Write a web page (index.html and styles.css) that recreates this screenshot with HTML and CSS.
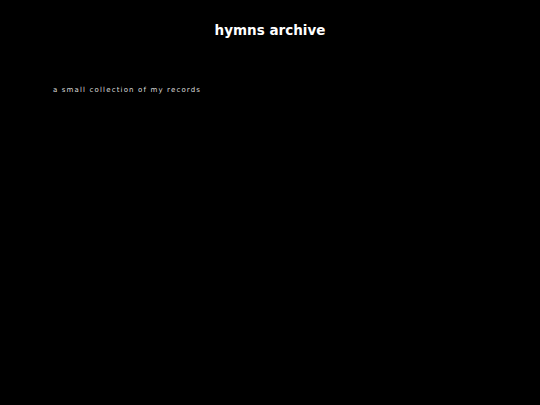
FILE: index.html
```html
<!DOCTYPE html>
<html lang="en">
<head>
    <meta charset="UTF-8">
    <meta name="viewport" content="width=device-width, initial-scale=1.0">
    <title>hymns archive</title>
    <link rel="stylesheet" href="styles.css">
</head>
<body>
    <header class="header">
        <h1 class="title">hymns archive</h1>
    </header>
    <p class="tagline">a small collection of my records</p>
</body>
</html>
```

FILE: styles.css
```css
body {
    margin: 0;
    background-color: #000;
    color: #fff;
    font-family: "DejaVu Sans", Verdana, sans-serif;
    height: 100vh;
}

.header {
    text-align: center;
    padding-top: 22px;
}

.title {
    margin: 0;
    font-size: 13.5px;
    font-weight: bold;
    line-height: 16px;
}

.tagline {
    margin: 48px 0 0 53px;
    font-size: 7px;
    letter-spacing: 1.15px;
    color: #ddd;
}
```
